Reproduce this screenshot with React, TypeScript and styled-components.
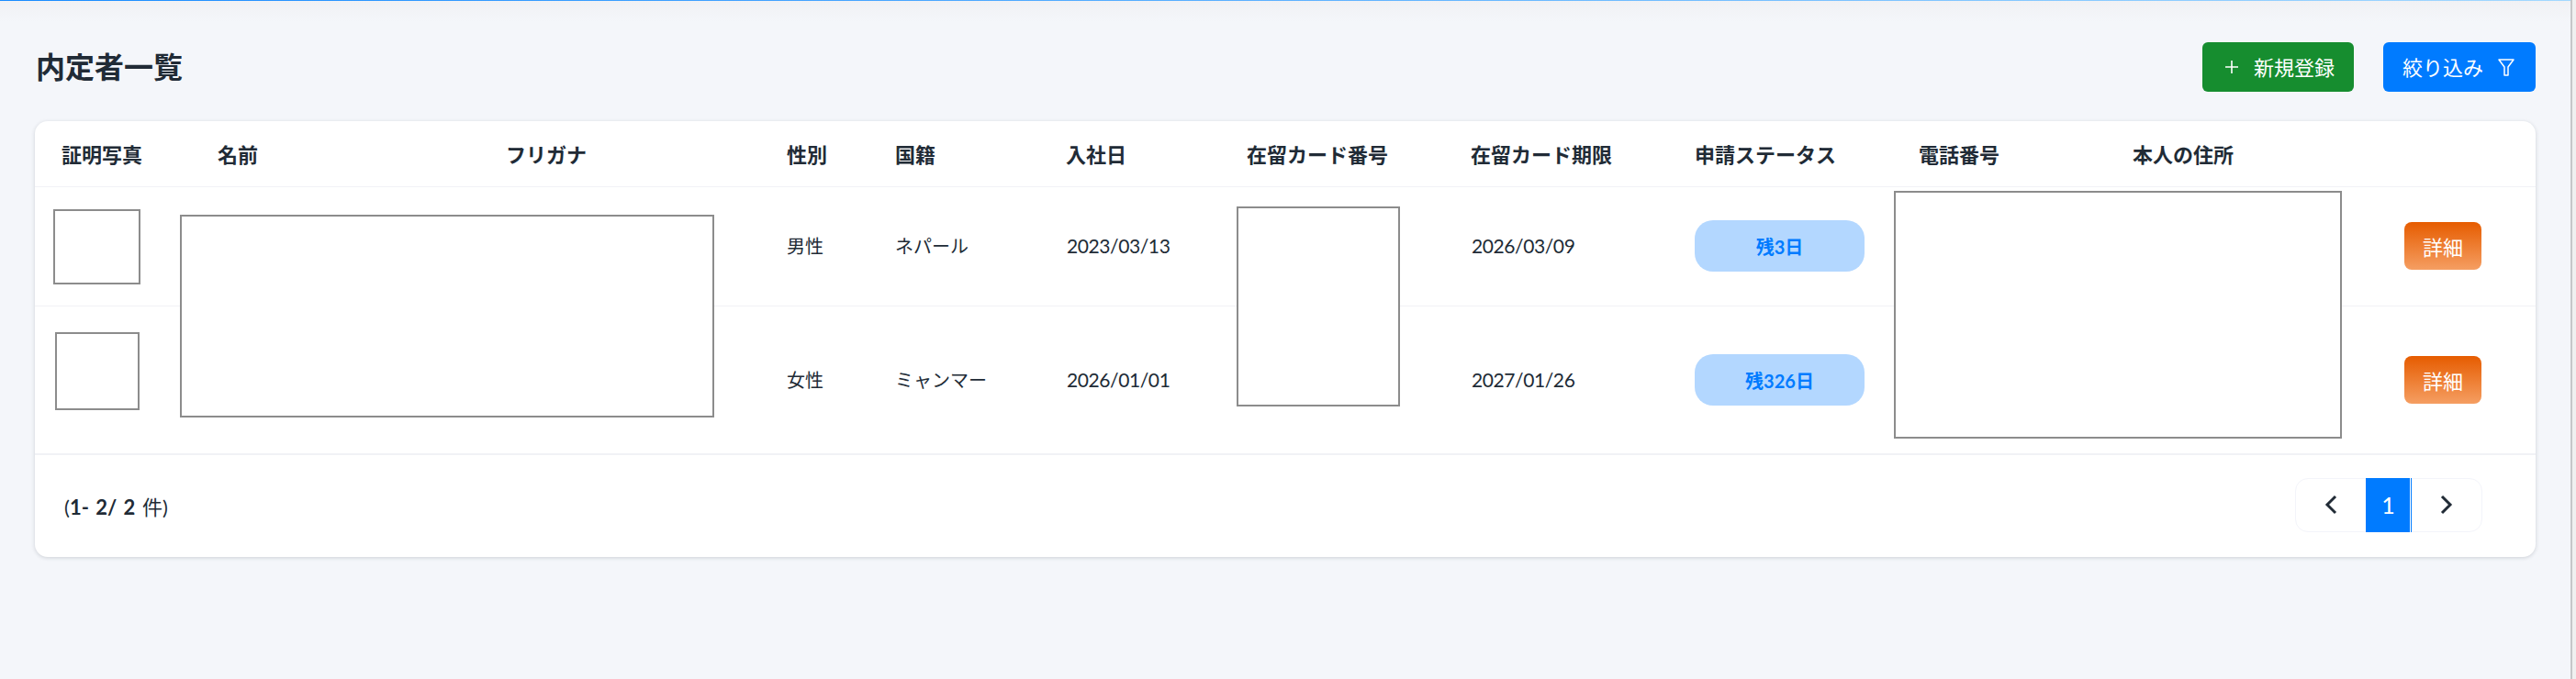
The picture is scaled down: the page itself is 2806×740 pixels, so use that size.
import React from "react";
import styled, { createGlobalStyle } from "styled-components";

const Global = createGlobalStyle`
  html, body { margin: 0; padding: 0; background: #f4f6fa; }
  body { font-family: "Lato", "Noto Sans CJK JP", sans-serif; color: #212b36; }
  * { box-sizing: border-box; }
`;

const Frame = styled.div`
  width: 2806px;
  height: 740px;
  overflow: hidden;
  display: flex;
  background: #f0f0f0;
`;

const Page = styled.main`
  width: 2802px;
  height: 740px;
  padding: 46px 38px 0 38px;
  border-right: 2px solid #c6c7c9;
  background:
    linear-gradient(90deg, #1a8cff, #a3d8ff) top / 100% 1px no-repeat,
    linear-gradient(180deg, #f0f1f4, #f4f6fa 24px);
`;

const Header = styled.header`
  display: flex;
  align-items: center;
  height: 54px;
`;

const Title = styled.h1`
  margin: 0 auto 0 1px;
  font-size: 32px;
  font-weight: 700;
  line-height: 1;
  color: #212b36;
`;

const ActionButton = styled.button<{ $bg: string; $w: number; $pad: number }>`
  height: 54px;
  width: ${(p) => p.$w}px;
  border: 0;
  border-radius: 6px;
  background: ${(p) => p.$bg};
  color: #fff;
  font: inherit;
  font-size: 22px;
  display: flex;
  align-items: center;
  padding: 0 0 2px ${(p) => p.$pad}px;
  & + & { margin-left: 32px; }
`;

const Card = styled.section`
  position: relative;
  margin-top: 32px;
  width: 2724px;
  height: 475px;
  background: #fff;
  border-radius: 14px;
  box-shadow: 0 1px 4px rgba(33, 43, 54, 0.18);
`;

const cols = "199px 314px 306px 118px 186px 197px 244px 244px 244px 233px 1fr";

const HeadRow = styled.div`
  display: grid;
  grid-template-columns: ${cols};
  height: 72px;
  padding-bottom: 2px;
  align-items: center;
  border-bottom: 1px solid #f1f2f6;
  font-size: 22px;
  font-weight: 700;
`;

const Row = styled.div<{ $h: number; $trim: number; $line: number }>`
  display: grid;
  grid-template-columns: ${cols};
  height: ${(p) => p.$h}px;
  padding-bottom: ${(p) => p.$trim}px;
  align-items: center;
  border-bottom: ${(p) => p.$line}px solid #f1f2f6;
  font-size: 20px;
`;

const FirstHead = styled.div`
  padding-left: 29px;
`;

const TextCell = styled.div`
  padding-bottom: 1px;
`;

const DateCell = styled.div`
  padding: 0 0 1px 1px;
  font-size: 21px;
  letter-spacing: -0.4px;
`;

const Pill = styled.div`
  width: 185px;
  height: 56px;
  border-radius: 20px;
  background: #b3d7ff;
  color: #007bff;
  font-weight: 700;
  display: flex;
  align-items: center;
  justify-content: center;
`;

const DetailCell = styled.div`
  display: flex;
  justify-content: flex-end;
  padding-right: 59px;
`;

const DetailButton = styled.button`
  width: 84px;
  height: 52px;
  border: 0;
  border-radius: 8px;
  background: linear-gradient(180deg, #e65c00, #f59e62);
  color: #fff;
  font: inherit;
  font-size: 22px;
  padding: 0;
`;

const Footer = styled.div`
  display: flex;
  align-items: center;
  justify-content: space-between;
  height: 111px;
  padding: 0 58px 0 32px;
  font-size: 22px;
`;

const Count = styled.div`
  white-space: pre;
  word-spacing: 2px;
  margin-bottom: 2px;
  b { font-weight: 700; }
`;

const Pager = styled.nav`
  display: flex;
  width: 204px;
  height: 59px;
  margin-top: -3px;
  border: 1px solid #f3f4fa;
  border-radius: 14px;
`;

const PageArrow = styled.div`
  width: 76px;
  display: flex;
  align-items: center;
  justify-content: center;
  color: #212b36;
`;

const PageCurrent = styled.div`
  width: 50px;
  margin: -1px 0;
  background: #007bff;
  color: #fff;
  font-size: 25px;
  font-weight: 400;
  border-right: 1px solid #007bff;
  box-shadow: inset -1px 0 0 #fff;
  display: flex;
  align-items: center;
  justify-content: center;
`;

const Redaction = styled.div<{ $x: number; $y: number; $w: number; $h: number }>`
  position: absolute;
  left: ${(p) => p.$x}px;
  top: ${(p) => p.$y}px;
  width: ${(p) => p.$w}px;
  height: ${(p) => p.$h}px;
  background: #fff;
  border: 2px solid #8c8c8c;
`;

const Plus = () => (
  <svg width="14" height="14" viewBox="0 0 14 14" style={{ marginRight: 17, marginTop: 2 }}>
    <path d="M7 0v14M0 7h14" stroke="#fff" strokeWidth="1.6" fill="none" />
  </svg>
);

const Filter = () => (
  <svg width="18" height="19" viewBox="0 0 18 19" style={{ marginLeft: 16, marginTop: 2 }}>
    <path d="M1 1h16L11 9v9H7V9z" stroke="#fff" strokeWidth="1.5" fill="none" strokeLinejoin="round" />
  </svg>
);

const Chevron = ({ d }: { d: string }) => (
  <svg width="14" height="22" viewBox="0 0 14 22">
    <path d={d} stroke="#212b36" strokeWidth="3" fill="none" />
  </svg>
);

const heads = ["名前", "フリガナ", "性別", "国籍", "入社日", "在留カード番号", "在留カード期限", "申請ステータス", "電話番号", "本人の住所"];

const rows = [
  { h: 130, trim: 1, line: 1, sex: "男性", nat: "ネパール", join: "2023/03/13", exp: "2026/03/09", left: "残3日" },
  { h: 162, trim: 0, line: 2, sex: "女性", nat: "ミャンマー", join: "2026/01/01", exp: "2027/01/26", left: "残326日" },
];

const boxes = [
  { x: 20, y: 96, w: 95, h: 82 },
  { x: 22, y: 230, w: 92, h: 85 },
  { x: 158, y: 102, w: 582, h: 221 },
  { x: 1309, y: 93, w: 178, h: 218 },
  { x: 2025, y: 76, w: 488, h: 270 },
];

export default function App() {
  return (
    <>
      <Global />
      <Frame>
        <Page>
          <Header>
            <Title>内定者一覧</Title>
            <ActionButton $bg="#168d2f" $w={165} $pad={25}><Plus />新規登録</ActionButton>
            <ActionButton $bg="#007bff" $w={166} $pad={21}>絞り込み<Filter /></ActionButton>
          </Header>
          <Card>
            <HeadRow>
              <FirstHead>証明写真</FirstHead>
              {heads.map((h) => <div key={h}>{h}</div>)}
            </HeadRow>
            {rows.map((r) => (
              <Row key={r.sex} $h={r.h} $trim={r.trim} $line={r.line}>
                <div />
                <div />
                <div />
                <TextCell>{r.sex}</TextCell>
                <TextCell>{r.nat}</TextCell>
                <DateCell>{r.join}</DateCell>
                <div />
                <DateCell>{r.exp}</DateCell>
                <Pill>{r.left}</Pill>
                <div />
                <DetailCell><DetailButton>詳細</DetailButton></DetailCell>
              </Row>
            ))}
            <Footer>
              <Count>(<b>1- 2/ 2</b> 件)</Count>
              <Pager>
                <PageArrow><Chevron d="M12 2 3 11l9 9" /></PageArrow>
                <PageCurrent>1</PageCurrent>
                <PageArrow><Chevron d="M2 2l9 9-9 9" /></PageArrow>
              </Pager>
            </Footer>
            {boxes.map((b) => <Redaction key={b.x} $x={b.x} $y={b.y} $w={b.w} $h={b.h} />)}
          </Card>
        </Page>
      </Frame>
    </>
  );
}
